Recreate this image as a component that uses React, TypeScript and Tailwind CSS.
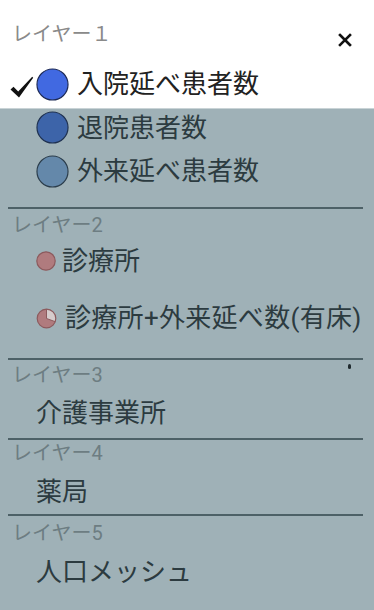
import React from "react";

const font = { fontFamily: 'Roboto, "Noto Sans CJK JP", "Noto Sans", sans-serif' };

function Circle({ fill, stroke, size = 33 }: { fill: string; stroke: string; size?: number }) {
  return (
    <svg width={size} height={size} viewBox="0 0 34 34" className="shrink-0">
      <circle cx="17" cy="17" r="16" fill={fill} stroke={stroke} strokeWidth="1.2" />
    </svg>
  );
}

function SmallCircle() {
  return (
    <svg width="20" height="20" viewBox="0 0 20 20" className="shrink-0">
      <circle cx="10" cy="10" r="9.2" fill="#b07b7e" stroke="#8c5a5d" strokeWidth="1.2" />
    </svg>
  );
}

function Pie() {
  const r = 9.3;
  const a = (20 * Math.PI) / 180;
  const ex = 10.5 + r * Math.cos(a);
  const ey = 10.5 + r * Math.sin(a);
  return (
    <svg width="21" height="21" viewBox="0 0 21 21" className="shrink-0">
      <circle cx="10.5" cy="10.5" r={r} fill="#b07b7e" />
      <path d={`M10.5 10.5 L10.5 ${10.5 - r} A${r} ${r} 0 0 1 ${ex} ${ey} Z`} fill="#d6cccc" />
      <path d={`M10.5 ${10.5 - r} L10.5 10.5 L${ex} ${ey}`} fill="none" stroke="#8c5a5d" strokeWidth="1" />
      <circle cx="10.5" cy="10.5" r={r} fill="none" stroke="#8c5a5d" strokeWidth="1.2" />
    </svg>
  );
}

function Divider() {
  return <div className="ml-[8px] w-[355px] h-[2px] bg-[#4d6167]" />;
}

export default function App() {
  return (
    <div className="w-[374px] h-[610px] overflow-hidden bg-white flex flex-col" style={font}>
      {/* white top */}
      <div className="h-[108px] shrink-0 flex flex-col">
        <div className="h-[62px] flex items-start justify-between pl-[12px] pr-[22px]">
          <span className="mt-[21px] text-[20px] leading-[26px] text-[#8a8a8a]">レイヤー１</span>
          <svg width="14" height="14" viewBox="0 0 14 14" className="mt-[33px]">
            <path d="M2 2 L12 12 M12 2 L2 12" stroke="#111" strokeWidth="2.6" strokeLinecap="square" />
          </svg>
        </div>
        <div className="h-[44px] flex items-center pl-[10px]">
          <svg width="24" height="22" viewBox="0 0 24 22" className="shrink-0 mt-[6px]">
            <path d="M0.5 13.5 L3.5 10.8 L8.2 15.6 L22.2 0.8 L23.2 1.8 L9 21.5 Z" fill="#111" />
          </svg>
          <div className="ml-[2px]">
            <Circle fill="#4169e1" stroke="#1d2a55" />
          </div>
          <span className="ml-[8px] text-[26px] leading-[34px] text-[#222]">入院延べ患者数</span>
        </div>
      </div>

      {/* dimmed area */}
      <div className="relative flex-1 bg-[#9fb1b7] border-t border-[#c9d3d6] text-[#2c3b40] flex flex-col">
        <div className="h-[37px] flex items-center pl-[36px]">
          <Circle fill="#3d64a9" stroke="#1f3150" />
          <span className="ml-[8px] text-[26px] leading-[34px]">退院患者数</span>
        </div>
        <div className="h-[50px] flex items-center pl-[36px]">
          <Circle fill="#6488aa" stroke="#2b3d4b" />
          <span className="ml-[8px] text-[26px] leading-[34px]">外来延べ患者数</span>
        </div>
        <div className="mt-[11px]">
          <Divider />
        </div>
        <div className="h-[32px] flex items-center pl-[12px] text-[20px] text-[#6d7d82]">レイヤー2</div>
        <div className="h-[40px] flex items-center pl-[36px]">
          <SmallCircle />
          <span className="ml-[6px] text-[26px] leading-[34px]">診療所</span>
        </div>
        <div className="mt-[17px] h-[40px] flex items-center pl-[36px]">
          <Pie />
          <span className="ml-[8px] text-[26px] leading-[34px] tracking-[0.3px] whitespace-nowrap">診療所+外来延べ数(有床)</span>
        </div>
        <div className="mt-[20px]">
          <Divider />
        </div>
        <div className="h-[30px] flex items-center pl-[12px] text-[20px] text-[#6d7d82]">レイヤー3</div>
        <div className="mt-[5px] h-[36px] flex items-center pl-[36px]">
          <span className="text-[26px] leading-[34px]">介護事業所</span>
        </div>
        <div className="mt-[7px]">
          <Divider />
        </div>
        <div className="h-[26px] flex items-center pl-[12px] text-[20px] text-[#6d7d82]">レイヤー4</div>
        <div className="mt-[6px] h-[40px] flex items-center pl-[36px]">
          <span className="text-[26px] leading-[34px]">薬局</span>
        </div>
        <div className="mt-[2px]">
          <Divider />
        </div>
        <div className="h-[34px] flex items-center pl-[12px] text-[20px] text-[#6d7d82]">レイヤー5</div>
        <div className="mt-[2px] h-[40px] flex items-center pl-[36px]">
          <span className="text-[26px] leading-[34px]">人口メッシュ</span>
        </div>
        <div className="absolute left-[348px] top-[255px] w-[3px] h-[5px] rounded-full bg-[#1f2a2e]" />
      </div>
    </div>
  );
}
